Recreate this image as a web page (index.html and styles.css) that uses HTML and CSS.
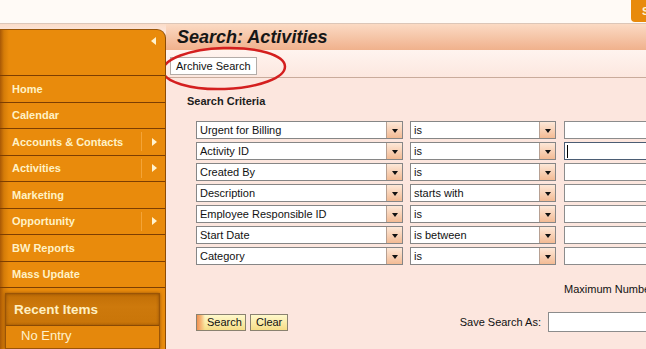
FILE: index.html
```html
<!DOCTYPE html>
<html lang="en">
<head>
    <meta charset="UTF-8">
    <meta name="viewport" content="width=device-width, initial-scale=1.0">
    <title>Search: Activities</title>
    <link rel="stylesheet" href="styles.css">
</head>
<body>
    <div class="topbar">
        <div class="topbar-fill"></div>
        <a class="top-button" href="#">Search</a>
    </div>
    <div class="layout">
        <aside class="sidebar">
            <div class="side-head"><span class="collapse"></span></div>
            <ul class="menu">
                <li><a href="#">Home</a></li>
                <li><a href="#">Calendar</a></li>
                <li><a href="#">Accounts &amp; Contacts</a><span class="sub"></span></li>
                <li><a href="#">Activities</a><span class="sub"></span></li>
                <li><a href="#">Marketing</a></li>
                <li><a href="#">Opportunity</a><span class="sub"></span></li>
                <li><a href="#">BW Reports</a></li>
                <li><a href="#">Mass Update</a></li>
            </ul>
            <div class="recent">
                <div class="recent-head">Recent Items</div>
                <div class="recent-item">No Entry</div>
            </div>
        </aside>
        <main class="main">
            <h1 class="page-title">Search: Activities</h1>
            <div class="tabs">
                <span class="tab">Archive Search</span>
                <svg class="mark" width="132" height="48" viewBox="0 0 132 48">
                    <ellipse cx="64" cy="23.5" rx="61" ry="20.5" transform="rotate(-2 64 23.5)" fill="none" stroke="#d41f1f" stroke-width="2.5"/>
                </svg>
            </div>
            <section class="criteria">
                <h2>Search Criteria</h2>
                <div class="rows">
                    <div class="row">
                        <div class="combo field"><span>Urgent for Billing</span><i class="drop"></i></div>
                        <div class="combo op"><span>is</span><i class="drop"></i></div>
                        <div class="value"></div>
                    </div>
                    <div class="row">
                        <div class="combo field"><span>Activity ID</span><i class="drop"></i></div>
                        <div class="combo op"><span>is</span><i class="drop"></i></div>
                        <div class="value focused"><span class="caret"></span></div>
                    </div>
                    <div class="row">
                        <div class="combo field"><span>Created By</span><i class="drop"></i></div>
                        <div class="combo op"><span>is</span><i class="drop"></i></div>
                        <div class="value"></div>
                    </div>
                    <div class="row">
                        <div class="combo field"><span>Description</span><i class="drop"></i></div>
                        <div class="combo op"><span>starts with</span><i class="drop"></i></div>
                        <div class="value"></div>
                    </div>
                    <div class="row">
                        <div class="combo field"><span>Employee Responsible ID</span><i class="drop"></i></div>
                        <div class="combo op"><span>is</span><i class="drop"></i></div>
                        <div class="value"></div>
                    </div>
                    <div class="row">
                        <div class="combo field"><span>Start Date</span><i class="drop"></i></div>
                        <div class="combo op"><span>is between</span><i class="drop"></i></div>
                        <div class="value"></div>
                    </div>
                    <div class="row">
                        <div class="combo field"><span>Category</span><i class="drop"></i></div>
                        <div class="combo op"><span>is</span><i class="drop"></i></div>
                        <div class="value"></div>
                    </div>
                </div>
                <div class="max-row">Maximum Number of Results:</div>
                <div class="actions">
                    <div class="buttons">
                        <button class="btn btn-search" type="button">Search</button>
                        <button class="btn" type="button">Clear</button>
                    </div>
                    <label class="save-label" for="saveAs">Save Search As:</label>
                    <input class="save-input" id="saveAs" type="text">
                </div>
            </section>
        </main>
    </div>
</body>
</html>
```

FILE: styles.css
```css
* { margin: 0; padding: 0; box-sizing: border-box; }
html, body { height: 100%; }
body { font-family: 'Liberation Sans', Arial, sans-serif; font-size: 11px; color: #111; background: #fce6de; width: 646px; overflow: hidden; }

.topbar { display: flex; height: 24px; background: #fffaf6; border-bottom: 1px solid #dcc6b8; overflow: hidden; }
.topbar-fill { flex: 0 0 631px; }
.top-button { flex: none; width: 60px; height: 22px; background: #e88a0c; border-radius: 0 0 0 4px; color: #fff3cf; font-weight: bold; line-height: 22px; padding-left: 11px; text-decoration: none; }

.layout { display: flex; height: calc(100% - 24px); background: linear-gradient(#fbdcc8, #fce6de 8px); }

.sidebar { flex: none; width: 166px; margin-top: 5px; background: linear-gradient(to right, #a85806 0, #d57c08 4px, #e98b0c 9px, #e98b0c 100%); border-top: 1px solid #9a5608; border-right: 1px solid #8c4c06; border-top-right-radius: 9px; overflow: hidden; }
.side-head { height: 46px; border-bottom: 1px solid #7c3e02; display: flex; justify-content: flex-end; padding: 7px 9px 0 0; }
.collapse { width: 0; height: 0; border-top: 4px solid transparent; border-bottom: 4px solid transparent; border-right: 5px solid #fff3cf; }

.menu { list-style: none; }
.menu li { display: flex; align-items: center; height: 26.5px; border-bottom: 1px solid #7c3e02; }
.menu a { flex: 1; padding-left: 12px; color: #fff2c6; font-weight: bold; text-decoration: none; }
.menu .sub { flex: none; width: 24px; height: 19px; border-left: 1px solid #f4a437; display: flex; align-items: center; padding-left: 10px; }
.menu .sub::after { content: ''; border-top: 4px solid transparent; border-bottom: 4px solid transparent; border-left: 5px solid #fff3cf; }

.recent { margin: 5px 5px 0 5px; background: #e5880c; border: 1px solid #9a5406; box-shadow: 0 0 3px rgba(90, 40, 0, 0.55); }
.recent-head { height: 32px; line-height: 31px; padding-left: 8px; background: linear-gradient(#c26f06, #cd790c 40%, #c97508); border-bottom: 1px solid #8a4a04; color: #fff0c2; font-size: 13.5px; font-weight: bold; box-shadow: inset 0 0 3px rgba(80, 35, 0, 0.5); }
.recent-item { height: 22px; line-height: 20px; padding-left: 15px; color: #fff2cc; font-size: 13px; }

.main { flex: 1; min-width: 0; background: #fce6de; overflow: hidden; }
.page-title { height: 26px; line-height: 26px; padding-left: 11px; background: linear-gradient(#fbdac4, #f0b18c); font-size: 18px; font-weight: bold; font-style: italic; color: #161616; white-space: nowrap; }
.tabs { position: relative; height: 28px; padding: 7px 0 0 4px; background: linear-gradient(#fff4ef, #fce7df); border-bottom: 1px solid #c9ab9b; }
.tab { display: inline-block; height: 18px; line-height: 16px; padding: 0 5px; background: #fff; border: 1px solid #b3aca8; }
.mark { position: absolute; left: -6px; top: -5px; overflow: visible; }

.criteria { padding: 16px 0 0 21px; }
.criteria h2 { font-size: 11px; line-height: 14px; font-weight: bold; color: #1d1d1d; }

.rows { margin-top: 13px; padding-left: 9px; display: flex; flex-direction: column; gap: 3px; }
.row { display: flex; gap: 7px; height: 18px; }
.combo { display: flex; flex: none; background: #fff; border: 1px solid #868686; }
.combo span { flex: 1; padding-left: 3px; line-height: 16px; white-space: nowrap; }
.field { width: 207px; }
.op { width: 146px; }
.drop { flex: none; width: 16px; border-left: 1px solid #b7a092; background: linear-gradient(#fde8d8, #f3bb94); display: flex; align-items: center; justify-content: center; padding-top: 1px; }
.drop::after { content: ''; border-top: 4px solid #111; border-left: 3.5px solid transparent; border-right: 3.5px solid transparent; }
.value { flex: none; width: 120px; margin-left: 1px; background: #fff; border: 1px solid #8c8c8c; display: flex; align-items: center; }
.value.focused { border-color: #4b5d74; }
.caret { width: 1px; height: 13px; margin-left: 2px; background: #000; }

.max-row { margin-top: 17px; padding-left: 377px; line-height: 14px; white-space: nowrap; }

.actions { margin-top: 16px; padding-left: 9px; display: flex; align-items: center; height: 20px; white-space: nowrap; }
.buttons { flex: none; width: 195px; display: flex; gap: 4px; }
.btn { height: 17px; padding: 0 5px; font-family: inherit; font-size: 11px; color: #111; border: 1px solid #8a8270; background: linear-gradient(#fff9cc, #f6dd86); }
.btn-search { width: 50px; padding-left: 10px; text-align: left; background: linear-gradient(to right, #f19050 0, #f6b878 4px, rgba(255, 249, 204, 0) 8px), linear-gradient(#fff9cc, #f6dd86); }
.save-label { flex: none; width: 150px; margin-right: 7px; text-align: right; }
.save-input { flex: none; width: 120px; height: 20px; border: 1px solid #8c8c8c; background: #fff; }
```
